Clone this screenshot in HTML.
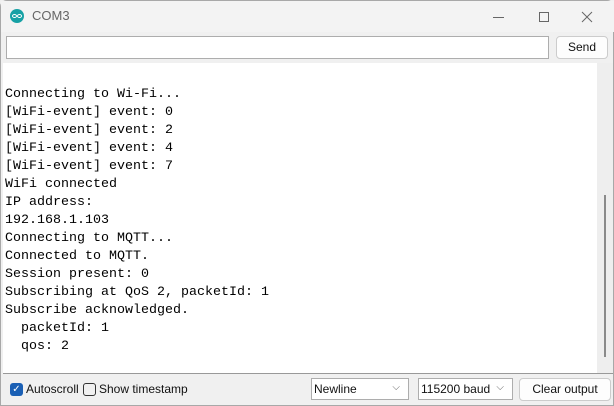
<!DOCTYPE html>
<html><head><style>
*{margin:0;padding:0;box-sizing:border-box}
body{width:614px;height:406px;background:#f0f0f0;font-family:"Liberation Sans",sans-serif;position:relative;overflow:hidden;border:1px solid #a8a8a8;border-radius:7px 7px 0 0}
.title{position:absolute;left:0;top:0;width:614px;height:31px;background:#f3f3f3}
.logo{position:absolute;left:9px;top:8px;width:14px;height:14px;border-radius:50%;background:#17a1a5}
.logo span{position:absolute;top:5px;width:5px;height:4px;border:1.2px solid #fff;border-radius:50%}
.t{position:absolute;left:31px;top:7px;font-size:13px;color:#666}
.inp{position:absolute;left:5px;top:35px;width:543px;height:23px;background:#fff;border:1px solid #adadad}
.btn{position:absolute;background:#fdfdfd;border:1px solid #ccc;border-radius:4px;font-size:12px;color:#111;text-align:center}
.area{position:absolute;left:2px;top:62px;width:610px;height:311px;background:#fff;border-bottom:1px solid #999}
.sb{position:absolute;right:0;top:0;width:16px;height:310px;background:#eee}
.th{position:absolute;left:7px;top:132px;width:2px;height:162px;background:#8a8a8a}
pre{position:absolute;left:2px;top:23px;font-family:"Liberation Mono",monospace;font-size:13.33px;line-height:18px;color:#000}
.chk{position:absolute;top:382px;width:13px;height:13px;border-radius:3px}
.lbl{position:absolute;top:381px;font-size:12px;color:#111}
.sel{position:absolute;top:377px;height:22px;background:#fff;border:1px solid #adadad;font-size:12px;padding:3px 2px;color:#111}
.sel i{position:absolute;right:8px;top:3px;font-style:normal;color:#666;font-size:10px}
</style></head><body>
<div class="title">
<div class="logo"><span style="left:2px"></span><span style="left:7px"></span></div>
<div class="t">COM3</div>
<svg style="position:absolute;left:480px;top:8px" width="130" height="16">
<path d="M12 8.5H23" stroke="#666" stroke-width="1"/>
<rect x="58.5" y="3.5" width="9" height="9" fill="none" stroke="#666" stroke-width="1"/>
<path d="M101 3L111 13M111 3L101 13" stroke="#666" stroke-width="1"/>
</svg>
</div>
<div class="inp"></div>
<div class="btn" style="left:555px;top:35px;width:52px;height:23px;line-height:21px">Send</div>
<div class="area"><div class="sb"><div class="th"></div></div>
<pre>Connecting to Wi-Fi...
[WiFi-event] event: 0
[WiFi-event] event: 2
[WiFi-event] event: 4
[WiFi-event] event: 7
WiFi connected
IP address: 
192.168.1.103
Connecting to MQTT...
Connected to MQTT.
Session present: 0
Subscribing at QoS 2, packetId: 1
Subscribe acknowledged.
  packetId: 1
  qos: 2</pre></div>
<div class="chk" style="left:9px;background:#1a5fb4;color:#fff;font-size:10px;line-height:13px;text-align:center">✓</div>
<div class="lbl" style="left:25px">Autoscroll</div>
<div class="chk" style="left:82px;border:1px solid #333"></div>
<div class="lbl" style="left:98px">Show timestamp</div>
<div class="sel" style="left:310px;width:98px">Newline<i>⌵</i></div>
<div class="sel" style="left:417px;width:95px">115200 baud<i>⌵</i></div>
<div class="btn" style="left:518px;top:377px;width:92px;height:23px;line-height:21px">Clear output</div>
</body></html>
